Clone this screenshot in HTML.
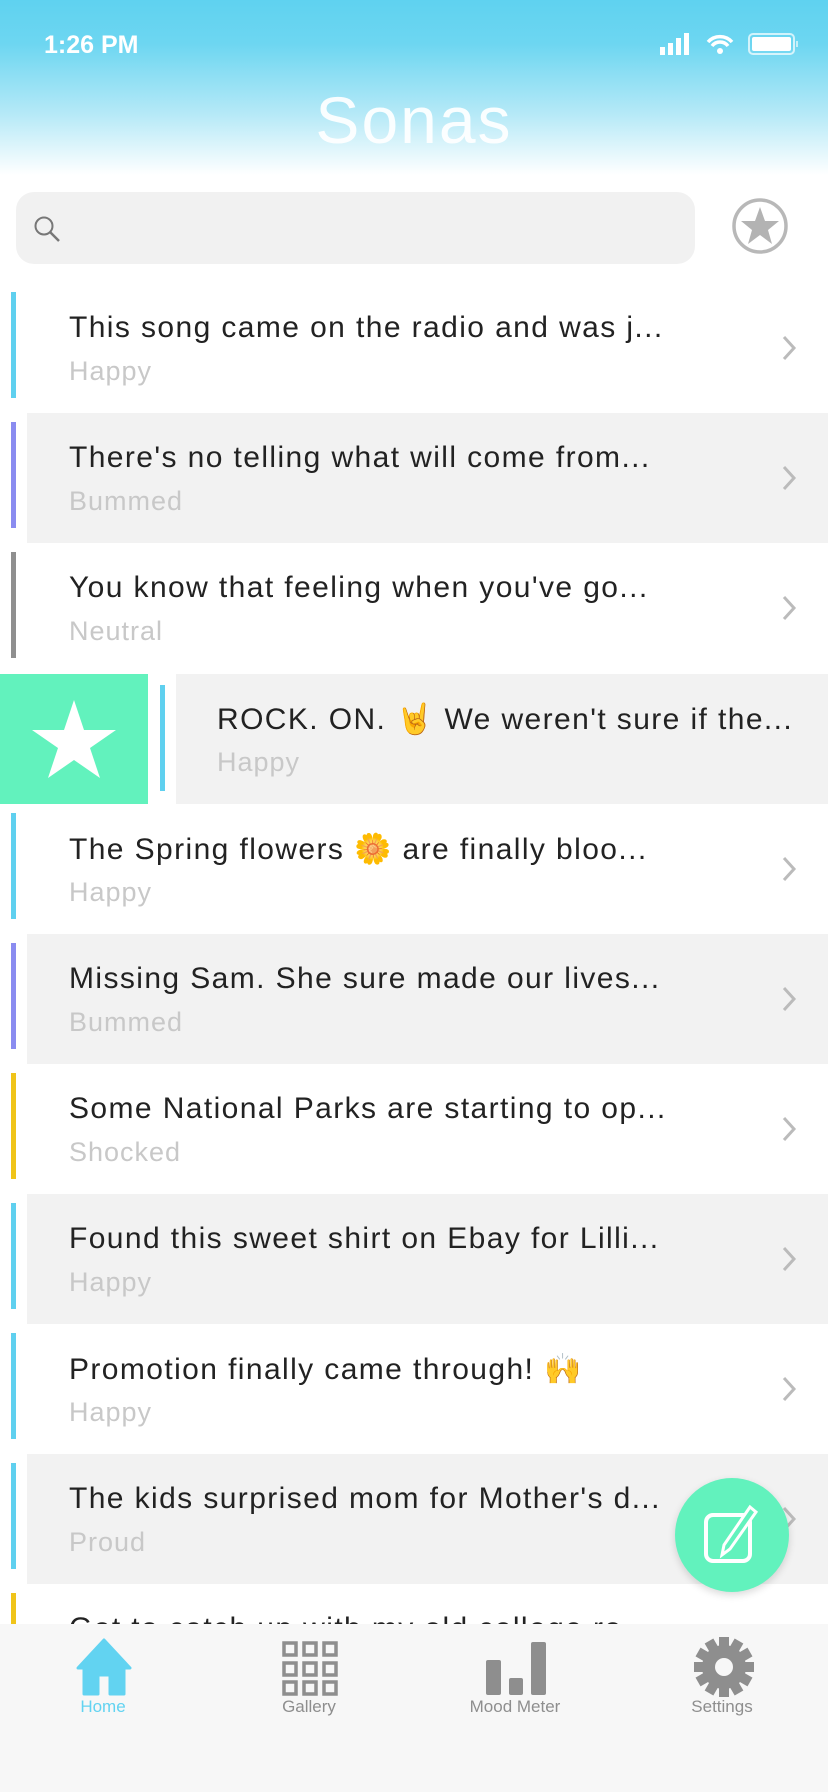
<!DOCTYPE html>
<html><head><meta charset="utf-8"><style>
*{margin:0;padding:0;box-sizing:border-box}
body{width:828px;height:1792px;overflow:hidden;background:#fff;font-family:"Liberation Sans","Noto Sans CJK JP",sans-serif;position:relative}
.hdr{position:absolute;left:0;top:0;width:828px;height:175px;background:linear-gradient(#5fd2f0 0%,#6dd6f1 25%,#b5e9f7 65%,#fff 100%)}
.time{position:absolute;left:44px;top:31px;color:#fff;font-size:25px;font-weight:bold}
.title{position:absolute;left:0;width:828px;top:82px;text-align:center;color:rgba(255,255,255,.92);font-size:66px;font-weight:300;letter-spacing:2px}
.search{position:absolute;left:16px;top:192px;width:679px;height:72px;background:#f1f1f1;border-radius:18px}
.row{position:absolute;left:0;width:828px;height:130px}
.row .bg{position:absolute;left:27px;top:0;right:0;bottom:0}
.row.g .bg{background:#f2f2f2}
.bar{position:absolute;left:11px;top:9px;width:5px;height:106px}
.t{position:absolute;left:69px;top:28px;font-size:30px;letter-spacing:1.4px;color:#222;white-space:nowrap}
.s{position:absolute;left:69px;top:73px;font-size:27px;letter-spacing:1px;color:#c8c8c8}
.chev{position:absolute;left:780px;top:50px}
.tab{position:absolute;left:0;top:1624px;width:828px;height:168px;background:#f7f7f7}
.tl{position:absolute;top:1697px;font-size:17px;color:#8e8e8e;width:160px;text-align:center}
</style></head><body>
<div class="hdr"></div>
<div class="time">1:26 PM</div>
<svg style="position:absolute;left:660px;top:32px" width="150" height="26">
<rect x="0" y="15" width="5" height="8" fill="#fff"/><rect x="8" y="11" width="5" height="12" fill="#fff"/><rect x="16" y="6" width="5" height="17" fill="#fff"/><rect x="24" y="1" width="5" height="22" fill="#fff"/>
<path d="M48 10 a16 16 0 0 1 24 0 M52 14 a10 10 0 0 1 16 0" stroke="#fff" stroke-width="3.5" fill="none"/><circle cx="60" cy="19" r="3" fill="#fff"/>
<rect x="89" y="2" width="45" height="20" rx="4" fill="none" stroke="#fff" stroke-width="2" opacity=".7"/><rect x="92" y="5" width="39" height="14" rx="2" fill="#fff"/><rect x="136" y="9" width="2" height="6" fill="#fff" opacity=".6"/>
</svg>
<div class="title">Sonas</div>
<div class="search"></div>
<svg style="position:absolute;left:32px;top:214px" width="30" height="30"><circle cx="12" cy="12" r="8.5" stroke="#777" stroke-width="2" fill="none"/><path d="M18 18 L27 27" stroke="#777" stroke-width="2.5"/></svg>
<svg style="position:absolute;left:731px;top:197px" width="58" height="58"><circle cx="29" cy="29" r="26" stroke="#b8b8b8" stroke-width="3.5" fill="none"/><path d="M29 10 L34 24 L48 24 L37 33 L41 47 L29 38 L17 47 L21 33 L10 24 L24 24Z" fill="#b3b3b3"/></svg>

<div class="row" style="top:283px"><div class="bg"></div><div class="bar" style="background:#5fd0ef"></div><div class="t">This song came on the radio and was j...</div><div class="s">Happy</div><svg class="chev" width="20" height="30"><path d="M4 4 L14 15 L4 26" stroke="#bbb" stroke-width="3" fill="none"/></svg></div>
<div class="row g" style="top:413px"><div class="bg"></div><div class="bar" style="background:#8a8cf0"></div><div class="t">There's no telling what will come from...</div><div class="s">Bummed</div><svg class="chev" width="20" height="30"><path d="M4 4 L14 15 L4 26" stroke="#bbb" stroke-width="3" fill="none"/></svg></div>
<div class="row" style="top:543px"><div class="bg"></div><div class="bar" style="background:#8f8f8f"></div><div class="t">You know that feeling when you've go...</div><div class="s">Neutral</div><svg class="chev" width="20" height="30"><path d="M4 4 L14 15 L4 26" stroke="#bbb" stroke-width="3" fill="none"/></svg></div>
<div class="row" style="top:674px">
<div style="position:absolute;left:0;top:0;width:148px;height:130px;background:#62f2bd"></div>
<svg style="position:absolute;left:30px;top:24px" width="88" height="82"><path d="M44 2 L54 32 L86 32 L60 50 L70 80 L44 62 L18 80 L28 50 L2 32 L34 32Z" fill="#fff"/></svg>
<div style="position:absolute;left:160px;top:11px;width:5px;height:106px;background:#5fd0ef"></div>
<div style="position:absolute;left:176px;top:0;right:0;height:130px;background:#f2f2f2"></div>
<div class="t" style="left:217px">ROCK. ON. 🤘 We weren't sure if the...</div><div class="s" style="left:217px">Happy</div></div>
<div class="row" style="top:804px"><div class="bg"></div><div class="bar" style="background:#5fd0ef"></div><div class="t">The Spring flowers 🌼 are finally bloo...</div><div class="s">Happy</div><svg class="chev" width="20" height="30"><path d="M4 4 L14 15 L4 26" stroke="#bbb" stroke-width="3" fill="none"/></svg></div>
<div class="row g" style="top:934px"><div class="bg"></div><div class="bar" style="background:#8a8cf0"></div><div class="t">Missing Sam. She sure made our lives...</div><div class="s">Bummed</div><svg class="chev" width="20" height="30"><path d="M4 4 L14 15 L4 26" stroke="#bbb" stroke-width="3" fill="none"/></svg></div>
<div class="row" style="top:1064px"><div class="bg"></div><div class="bar" style="background:#f0c419"></div><div class="t">Some National Parks are starting to op...</div><div class="s">Shocked</div><svg class="chev" width="20" height="30"><path d="M4 4 L14 15 L4 26" stroke="#bbb" stroke-width="3" fill="none"/></svg></div>
<div class="row g" style="top:1194px"><div class="bg"></div><div class="bar" style="background:#5fd0ef"></div><div class="t">Found this sweet shirt on Ebay for Lilli...</div><div class="s">Happy</div><svg class="chev" width="20" height="30"><path d="M4 4 L14 15 L4 26" stroke="#bbb" stroke-width="3" fill="none"/></svg></div>
<div class="row" style="top:1324px"><div class="bg"></div><div class="bar" style="background:#5fd0ef"></div><div class="t">Promotion finally came through! 🙌</div><div class="s">Happy</div><svg class="chev" width="20" height="30"><path d="M4 4 L14 15 L4 26" stroke="#bbb" stroke-width="3" fill="none"/></svg></div>
<div class="row g" style="top:1454px"><div class="bg"></div><div class="bar" style="background:#5fd0ef"></div><div class="t">The kids surprised mom for Mother's d...</div><div class="s">Proud</div><svg class="chev" width="20" height="30"><path d="M4 4 L14 15 L4 26" stroke="#bbb" stroke-width="3" fill="none"/></svg></div>
<div class="row" style="top:1584px"><div class="bg"></div><div class="bar" style="background:#f0c419"></div><div class="t">Got to catch up with my old college ro...</div></div>

<div style="position:absolute;left:675px;top:1478px;width:114px;height:114px;border-radius:50%;background:#62f2bd;box-shadow:0 3px 8px rgba(0,0,0,.15)"></div>
<svg style="position:absolute;left:700px;top:1503px" width="66" height="66"><rect x="6" y="12" width="44" height="46" rx="7" stroke="#fff" stroke-width="4" fill="none"/><path d="M50 4 L56 9 L30 46 L22 52 L24 42Z" stroke="#fff" stroke-width="3" fill="#62f2bd"/></svg>

<div class="tab"></div>
<svg style="position:absolute;left:74px;top:1638px" width="60" height="58"><path d="M30 2 L56 30 L50 30 L50 56 L36 56 L36 37 L24 37 L24 56 L10 56 L10 30 L4 30Z" fill="#62d3f1" stroke="#62d3f1" stroke-width="3" stroke-linejoin="round"/></svg>
<svg style="position:absolute;left:281px;top:1640px" width="58" height="56" fill="none" stroke="#8e8e8e" stroke-width="3.5"><rect x="3" y="3" width="12" height="12"/><rect x="23" y="3" width="12" height="12"/><rect x="43" y="3" width="12" height="12"/><rect x="3" y="23" width="12" height="12"/><rect x="23" y="23" width="12" height="12"/><rect x="43" y="23" width="12" height="12"/><rect x="3" y="42" width="12" height="12"/><rect x="23" y="42" width="12" height="12"/><rect x="43" y="42" width="12" height="12"/></svg>
<svg style="position:absolute;left:485px;top:1640px" width="62" height="56" fill="#8e8e8e"><rect x="1" y="20" width="15" height="35" rx="2"/><rect x="24" y="38" width="14" height="17" rx="2"/><rect x="46" y="2" width="15" height="53" rx="2"/></svg>
<svg style="position:absolute;left:694px;top:1637px" width="60" height="60"><g fill="#8e8e8e" transform="translate(30 30)"><circle r="22"/><g id="t"><rect x="-5" y="-30" width="10" height="12"/></g><use href="#t" transform="rotate(30)"/><use href="#t" transform="rotate(60)"/><use href="#t" transform="rotate(90)"/><use href="#t" transform="rotate(120)"/><use href="#t" transform="rotate(150)"/><use href="#t" transform="rotate(180)"/><use href="#t" transform="rotate(210)"/><use href="#t" transform="rotate(240)"/><use href="#t" transform="rotate(270)"/><use href="#t" transform="rotate(300)"/><use href="#t" transform="rotate(330)"/></g><circle cx="30" cy="30" r="9" fill="#f7f7f7"/></svg>
<div class="tl" style="left:23px;color:#62d3f1">Home</div>
<div class="tl" style="left:229px">Gallery</div>
<div class="tl" style="left:435px">Mood Meter</div>
<div class="tl" style="left:642px">Settings</div>
</body></html>
